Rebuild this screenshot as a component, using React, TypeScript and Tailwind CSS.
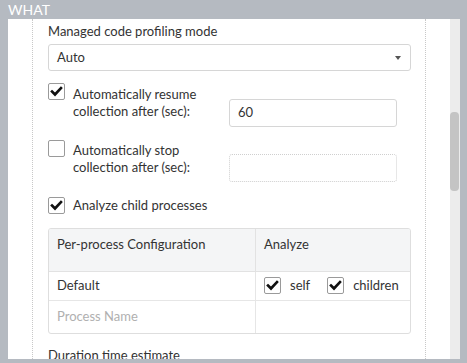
function Check({ checked }: { checked: boolean }) {
  return (
    <div className="w-[17px] h-[17px] shrink-0 rounded-[2px] border border-[#9a9a9a] bg-white flex items-center justify-center">
      {checked && (
        <svg width="13" height="13" viewBox="0 0 13 13">
          <path d="M2 6.5 L5 9.5 L11 3" fill="none" stroke="#111" strokeWidth="2.6" strokeLinecap="square" />
        </svg>
      )}
    </div>
  );
}

export default function App() {
  return (
    <div className="w-[467px] h-[363px] bg-[#b5bac1] flex flex-col overflow-hidden text-[13px] text-[#333]" style={{ fontFamily: "Lato, 'Open Sans', sans-serif" }}>
      <div className="h-[19px] px-[8px] text-white leading-[19px] text-[14px]">WHAT</div>
      <div className="flex h-[340px]">
        <div className="ml-[8px] w-[442px] bg-white overflow-hidden pl-[24px]">
          <div className="w-[394px] h-full border-l border-r border-dotted border-[#c8c8c8] pl-[15px]">
            <div className="w-[363px] pt-[3px]">
              <div className="leading-[18px]">Managed code profiling mode</div>
              <div className="mt-[4px] h-[27px] border border-[#d6d6d6] rounded-[3px] flex items-center justify-between pl-[8px] pr-[9px]">
                <span>Auto</span>
                <svg width="6" height="4" viewBox="0 0 6 4">
                  <path d="M0 0 H6 L3 4 Z" fill="#555" />
                </svg>
              </div>

              {/* resume */}
              <div className="mt-[12px] flex items-start">
                <Check checked />
                <div className="ml-[8px] w-[156px] mt-[3px] leading-[17px]">
                  Automatically resume<br />collection after (sec):
                </div>
                <div className="mt-[16px] w-[168px] h-[28px] border border-[#d6d6d6] rounded-[3px] flex items-center pl-[8px]">60</div>
              </div>

              {/* stop */}
              <div className="mt-[13px] flex items-start">
                <Check checked={false} />
                <div className="ml-[8px] w-[156px] mt-[2px] leading-[17px]">
                  Automatically stop<br />collection after (sec):
                </div>
                <div className="mt-[14px] w-[168px] h-[28px] border border-dotted border-[#cfcfcf] rounded-[3px]"></div>
              </div>

              {/* child */}
              <div className="mt-[14px] flex items-center">
                <Check checked />
                <span className="ml-[8px]">Analyze child processes</span>
              </div>

              {/* table */}
              <div className="mt-[12px] border border-[#dedede] rounded-[3px] overflow-hidden">
                <div className="flex h-[43px] bg-[#f4f5f6] border-b border-[#e2e2e2]">
                  <div className="w-[207px] pl-[8px] pt-[6px] border-r border-[#e2e2e2] leading-[18px]">Per-process Configuration</div>
                  <div className="flex-1 pl-[8px] pt-[6px] leading-[18px]">Analyze</div>
                </div>
                <div className="flex h-[29px] border-b border-[#e6e6e6]">
                  <div className="w-[207px] pl-[8px] flex items-center border-r border-[#e6e6e6]">Default</div>
                  <div className="flex-1 pl-[8px] flex items-center">
                    <Check checked />
                    <span className="ml-[9px]">self</span>
                    <div className="ml-[17px]"><Check checked /></div>
                    <span className="ml-[9px]">children</span>
                  </div>
                </div>
                <div className="flex h-[32px]">
                  <div className="w-[207px] pl-[8px] flex items-center border-r border-[#e6e6e6] text-[#b0b0b0]">Process Name</div>
                  <div className="flex-1"></div>
                </div>
              </div>

              <div className="mt-[12px] leading-[18px]">Duration time estimate</div>
            </div>
          </div>
        </div>
        <div className="w-[10px] h-full bg-[#ececec] relative">
          <div className="absolute left-[0px] top-[93px] w-[9px] h-[79px] rounded-[4px] bg-[#c4c4c4]"></div>
        </div>
      </div>
    </div>
  );
}
